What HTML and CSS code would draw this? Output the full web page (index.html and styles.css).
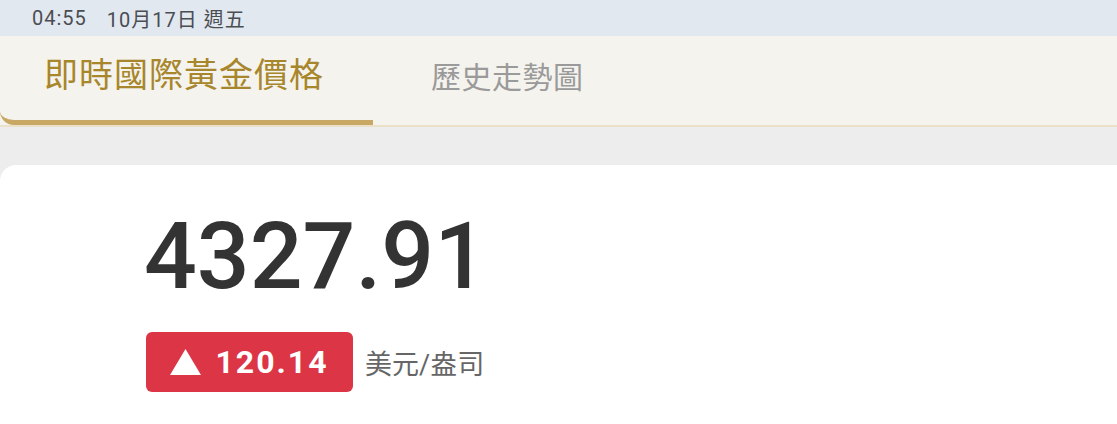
FILE: index.html
```html
<!DOCTYPE html>
<html lang="zh-Hant">
<head>
  <meta charset="UTF-8" />
  <title>即時國際黃金價格</title>
  <meta name="viewport" content="width=device-width, initial-scale=1" />
  <link rel="stylesheet" href="styles.css">
</head>
<body>

<div class="status-bar">
  <span class="time">04:55</span>
  <span class="date">10月17日 週五</span>
</div>

<nav class="tabs">
  <div class="tab active">即時國際黃金價格</div>
  <div class="tab">歷史走勢圖</div>
</nav>

<main class="content">
  <section class="card">
    <div class="price">4327.91</div>
    <div class="change-row">
      <div class="badge up">
        <svg class="arrow" width="31" height="26" viewBox="0 0 31 26"><polygon points="15.5,0 31,26 0,26" fill="#fff"/></svg>
        <span class="change">120.14</span>
      </div>
      <span class="unit">美元/盎司</span>
    </div>
  </section>
</main>

</body>
</html>
```

FILE: styles.css
```css
body {
  margin: 0;
  padding: 0;
  font-family: Roboto, "Noto Sans CJK TC", sans-serif;
  background: #ededed;
  height: 424px;
  overflow: hidden;
}

.status-bar {
  height: 36px;
  background: #e2e8f0;
  color: #4a4d52;
  font-size: 20px;
  letter-spacing: 1px;
  display: flex;
  align-items: center;
  padding-left: 32px;
  gap: 20px;
}

.tabs {
  height: 89px;
  background: #f5f3ee;
  border-bottom: 2px solid #ebe1c9;
  display: flex;
}

.tab {
  font-size: 30px;
  color: #9a9a9a;
  display: flex;
  align-items: center;
  padding-bottom: 12px;
  letter-spacing: 0.5px;
  box-sizing: border-box;
}

.tab.active {
  width: 373px;
  padding-left: 44px;
  font-size: 34px;
  letter-spacing: 1px;
  color: #a8862b;
  border-bottom: 5px solid #c9a865;
  border-bottom-left-radius: 14px;
  margin-right: 58px;
}

.content {
  padding-top: 38px;
}

.card {
  background: white;
  border-top-left-radius: 16px;
  padding: 44px 0 0 144px;
  height: 215px;
}

.price {
  font-size: 93px;
  font-weight: 500;
  line-height: 96px;
  color: #333;
}

.change-row {
  display: flex;
  align-items: center;
  margin-top: 27px;
  margin-left: 2px;
  gap: 12px;
}

.badge {
  width: 207px;
  height: 60px;
  border-radius: 6px;
  display: flex;
  align-items: center;
  justify-content: center;
  gap: 14px;
}

.badge.up {
  background: #dc3545;
}

.change {
  color: white;
  font-size: 32px;
  font-weight: bold;
  letter-spacing: 2px;
}

.unit {
  font-size: 27px;
  color: #666;
}
```
